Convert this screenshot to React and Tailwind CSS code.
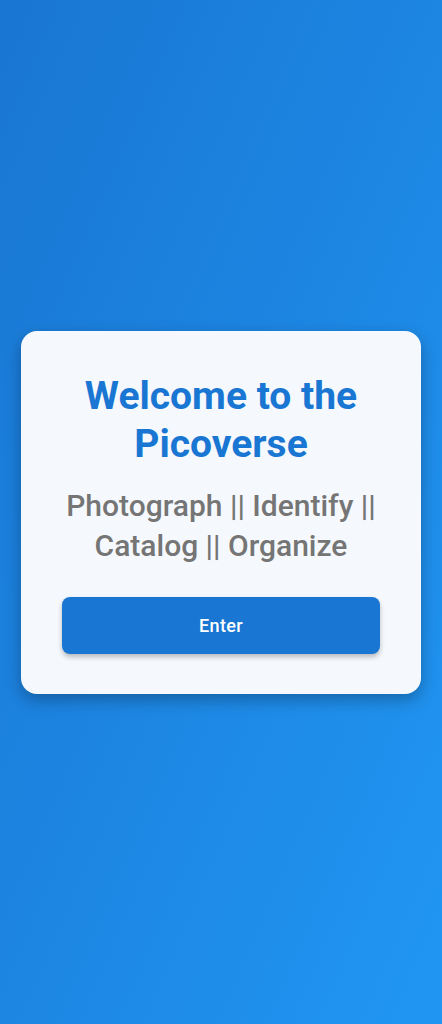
const App = () => {
  return (
    <div
      className="min-h-screen w-full flex items-center justify-center px-[21px] bg-gradient-to-br from-[#1976d2] to-[#2196f3]"
      style={{ fontFamily: 'Roboto, "Noto Sans", sans-serif' }}
    >
      <div className="w-full bg-[#f5f9fd] rounded-2xl shadow-[0_6px_16px_rgba(0,0,0,0.28)] px-[41px] pt-[41px] pb-[40px] flex flex-col items-center text-center">
        <h1 className="text-[39px] leading-[48px] font-bold text-[#1976d2]">
          Welcome to the Picoverse
        </h1>
        <p className="mt-[18px] text-[30px] leading-[40px] font-medium text-[#757575]">
          Photograph || Identify || Catalog || Organize
        </p>
        <button className="mt-[31px] w-full h-[57px] rounded-lg bg-[#1976d2] text-white text-[18px] tracking-[0.02em] font-medium shadow-[0_3px_5px_rgba(0,0,0,0.25)]">
          Enter
        </button>
      </div>
    </div>
  );
};

export default App;
